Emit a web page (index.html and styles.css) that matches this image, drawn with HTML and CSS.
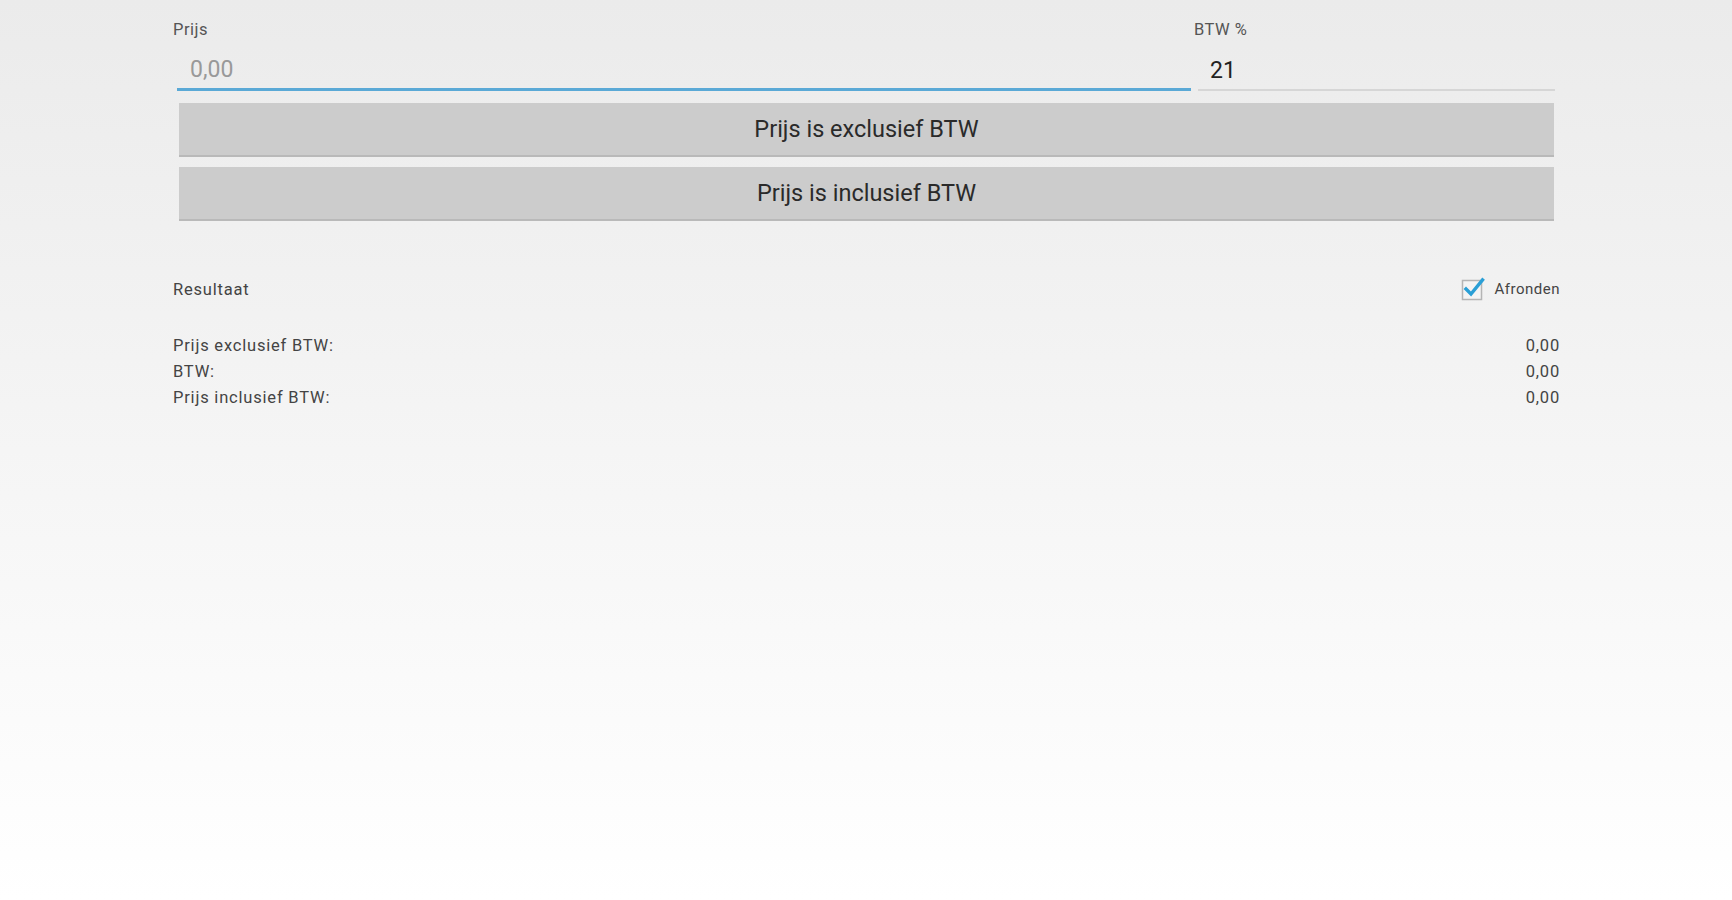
FILE: index.html
```html
<!DOCTYPE html>
<html lang="nl">
<head>
    <meta charset="UTF-8">
    <meta name="viewport" content="width=device-width, initial-scale=1.0">
    <title>BTW Calculator</title>
    <link rel="stylesheet" href="styles.css">
</head>
<body>

<main class="calc">
    <div class="inputs">
        <div class="field field-price">
            <label for="price">Prijs</label>
            <input type="text" id="price" class="active" placeholder="0,00">
        </div>
        <div class="field field-vat">
            <label for="vat">BTW %</label>
            <input type="text" id="vat" value="21">
        </div>
    </div>

    <button class="btn">Prijs is exclusief BTW</button>
    <button class="btn">Prijs is inclusief BTW</button>

    <div class="result-head">
        <span>Resultaat</span>
        <label class="round">
            <svg class="check" width="24" height="24" viewBox="0 0 24 24">
                <rect x="1.5" y="3.5" width="19" height="19" fill="#f4f4f4" stroke="#b5b5b5" stroke-width="1.5"/>
                <path d="M5 12 L10 17 L21.5 3" fill="none" stroke="#2a9fd6" stroke-width="3.4" stroke-linecap="square"/>
            </svg>
            Afronden
        </label>
    </div>

    <div class="result">
        <div class="row"><span>Prijs exclusief BTW:</span><span>0,00</span></div>
        <div class="row"><span>BTW:</span><span>0,00</span></div>
        <div class="row"><span>Prijs inclusief BTW:</span><span>0,00</span></div>
    </div>
</main>

</body>
</html>
```

FILE: styles.css
```css
html {
    min-height: 100%;
    background: linear-gradient(#ebebeb, #ffffff);
}
body {
    font-family: Roboto, "Liberation Sans", sans-serif;
    margin: 0;
    min-height: 900px;
    color: #333;
}
.calc {
    padding: 20px 172px 0 173px;
}
.inputs {
    display: flex;
    gap: 3px;
}
.field {
    display: flex;
    flex-direction: column;
}
.field-price {
    width: 1018px;
}
.field-vat {
    flex: 1;
}
.field label {
    font-size: 16.5px;
    letter-spacing: 0.5px;
    color: #555;
    height: 20px;
}
.field input {
    font-family: inherit;
    font-size: 23px;
    color: #222;
    background: transparent;
    border: none;
    border-bottom: 2px solid #d6d6d6;
    outline: none;
    height: 46px;
    padding: 6px 0 0 13px;
    margin: 5px 0 0 4px;
    box-sizing: border-box;
}
.field input::placeholder {
    color: #999;
}
.field input.active {
    border-bottom: 3px solid #5aa9d6;
}
.field-vat input {
    margin-right: 5px;
    padding-left: 12px;
}
.btn {
    display: block;
    width: calc(100% - 12px);
    margin: 12px 6px 0;
    height: 54px;
    background: #cccccc;
    border: none;
    border-bottom: 2px solid #b9b9b9;
    font-family: inherit;
    font-size: 23.5px;
    color: #2a2a2a;
}
.btn + .btn {
    margin-top: 10px;
}
.result-head {
    display: flex;
    justify-content: space-between;
    align-items: center;
    margin-top: 56px;
    font-size: 16.5px;
    letter-spacing: 0.8px;
    color: #444;
}
.round {
    display: flex;
    align-items: center;
    gap: 10px;
    font-size: 15px;
    letter-spacing: 0.5px;
}
.result {
    margin-top: 32px;
    font-size: 16.5px;
    letter-spacing: 0.8px;
    color: #444;
}
.row {
    display: flex;
    justify-content: space-between;
    line-height: 26px;
}
```
